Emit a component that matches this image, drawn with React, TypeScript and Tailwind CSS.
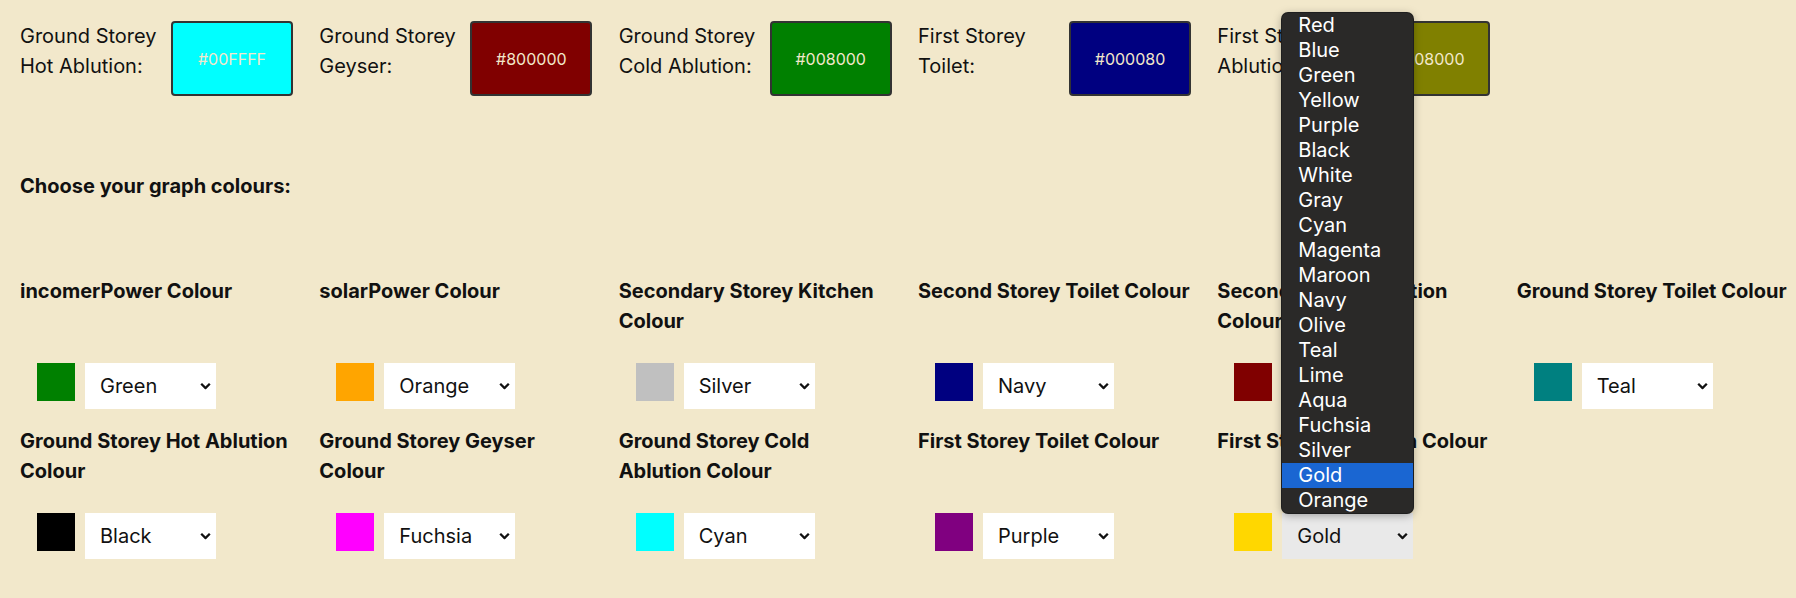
import React from "react";

const topItems = [
  { label: "Ground Storey Hot Ablution:", color: "#00FFFF" },
  { label: "Ground Storey Geyser:", color: "#800000" },
  { label: "Ground Storey Cold Ablution:", color: "#008000" },
  { label: "First Storey Toilet:", color: "#000080" },
  { label: "First Storey Ablution:", color: "#808000" },
];

const colourNames: string[] = [
  "Red",
  "Blue",
  "Green",
  "Yellow",
  "Purple",
  "Black",
  "White",
  "Gray",
  "Cyan",
  "Magenta",
  "Maroon",
  "Navy",
  "Olive",
  "Teal",
  "Lime",
  "Aqua",
  "Fuchsia",
  "Silver",
  "Gold",
  "Orange",
];

const gridItems = [
  { label: "incomerPower Colour", value: "Green", swatch: "#008000" },
  { label: "solarPower Colour", value: "Orange", swatch: "#FFA500" },
  { label: "Secondary Storey Kitchen Colour", value: "Silver", swatch: "#C0C0C0" },
  { label: "Second Storey Toilet Colour", value: "Navy", swatch: "#000080" },
  { label: "Second Storey Ablution Colour", value: "Maroon", swatch: "#800000" },
  { label: "Ground Storey Toilet Colour", value: "Teal", swatch: "#008080" },
  { label: "Ground Storey Hot Ablution Colour", value: "Black", swatch: "#000000" },
  { label: "Ground Storey Geyser Colour", value: "Fuchsia", swatch: "#FF00FF" },
  { label: "Ground Storey Cold Ablution Colour", value: "Cyan", swatch: "#00FFFF" },
  { label: "First Storey Toilet Colour", value: "Purple", swatch: "#800080" },
  { label: "First Storey Ablution Colour", value: "Gold", swatch: "#FFD700", open: true },
];

function Chevron() {
  return (
    <svg
      width="11"
      height="7"
      viewBox="0 0 11 7"
      className="pointer-events-none absolute right-[5px] top-1/2 -translate-y-1/2"
    >
      <path d="M1.2 1.2 L5.5 5.5 L9.8 1.2" fill="none" stroke="#111" strokeWidth="2.3" />
    </svg>
  );
}

function ColourSelect({ value, open }: { value: string; open?: boolean }) {
  return (
    <div className="relative h-[46px] w-[131px]">
      <select
        defaultValue={value}
        className={`h-full w-full appearance-none pl-[15px] text-[20px] leading-[30px] text-[#111] outline-none ${
          open ? "bg-[#e9e9e9]" : "bg-white"
        }`}
      >
        {colourNames.map((n) => (
          <option key={n} value={n}>
            {n}
          </option>
        ))}
      </select>
      <Chevron />
      {open && (
        <div className="absolute bottom-full left-0 z-20 w-[131px] overflow-hidden rounded-[6px] bg-[#2a2928] shadow-[0_0_0_1px_#1e1e1e,0_2px_10px_rgba(0,0,0,0.35)]">
          {colourNames.map((n) => (
            <div
              key={n}
              className={`h-[25px] pl-[16px] text-[20px] leading-[25px] text-white ${
                n === value ? "bg-[#1a66d2]" : ""
              }`}
            >
              {n}
            </div>
          ))}
        </div>
      )}
    </div>
  );
}

export default function App() {
  return (
    <div
      className="min-h-screen w-full bg-[#f2e8cb] text-[#111]"
      style={{ fontFamily: 'Inter, "Noto Sans", sans-serif' }}
    >
      <div className="grid grid-cols-6 pt-[21px]">
        {topItems.map((t) => (
          <div key={t.label} className="flex items-start pl-[20px]">
            <div className="w-[141px] text-[20px] leading-[30px]">{t.label}</div>
            <div
              className="ml-[10px] flex h-[75px] w-[122px] shrink-0 items-center justify-center rounded-[4px] border-2 border-[#333] text-[16px] text-[#f2e8cb]"
              style={{ backgroundColor: t.color }}
            >
              {t.color}
            </div>
          </div>
        ))}
      </div>

      <div className="mt-[75px] pl-[20px] text-[20px] font-bold leading-[30px]">
        Choose your graph colours:
      </div>

      <div className="mt-[75px] grid grid-cols-6 gap-y-[17px] pb-[40px]">
        {gridItems.map((g) => (
          <div key={g.label} className="flex flex-col">
            <div className="min-h-[60px] pl-[20px] pr-[2px] text-[20px] font-bold leading-[30px]">
              {g.label}
            </div>
            <div className="mt-[27px] flex items-start pl-[37px]">
              <div className="h-[38px] w-[38px] shrink-0" style={{ backgroundColor: g.swatch }} />
              <div className="ml-[10px]">
                <ColourSelect value={g.value} open={g.open} />
              </div>
            </div>
          </div>
        ))}
      </div>
    </div>
  );
}
